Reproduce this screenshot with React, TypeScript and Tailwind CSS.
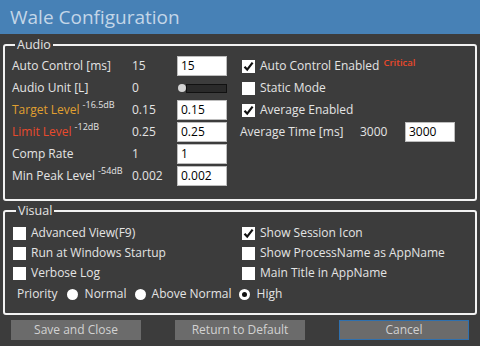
import React from "react";

type LevelRow = {
  label: string;
  labelClass?: string;
  db?: string;
  value: string;
  input?: string;
  slider?: boolean;
};

const audioRows: LevelRow[] = [
  { label: "Auto Control [ms]", value: "15", input: "15" },
  { label: "Audio Unit [L]", value: "0", slider: true },
  { label: "Target Level", labelClass: "text-[#e0a030]", db: "-16.5dB", value: "0.15", input: "0.15" },
  { label: "Limit Level", labelClass: "text-[#e84a2c]", db: "-12dB", value: "0.25", input: "0.25" },
  { label: "Comp Rate", value: "1", input: "1" },
  { label: "Min Peak Level", db: "-54dB", value: "0.002", input: "0.002" },
];

function Check({ checked }: { checked?: boolean }) {
  return (
    <span className="flex h-[13px] w-[13px] shrink-0 items-center justify-center bg-white">
      {checked && (
        <svg width="11" height="11" viewBox="0 0 11 11">
          <path d="M1.5 5.8 L4.2 8.6 L9.6 1.6" fill="none" stroke="#111" strokeWidth="2.2" />
        </svg>
      )}
    </span>
  );
}

function CheckRow({ label, checked }: { label: string; checked?: boolean }) {
  return (
    <div className="flex h-[20px] items-center gap-[5px]">
      <Check checked={checked} />
      <span>{label}</span>
    </div>
  );
}

function Radio({ checked }: { checked?: boolean }) {
  return (
    <span className="flex h-[11px] w-[11px] items-center justify-center rounded-full bg-white">
      {checked && <span className="h-[5px] w-[5px] rounded-full bg-[#111]" />}
    </span>
  );
}

function TextBox({ value }: { value: string }) {
  return (
    <div className="flex h-[20px] w-[50px] items-center border border-[#bdbdbd] bg-white pl-[3px] text-[12px] text-black">
      {value}
    </div>
  );
}

function Button({ label, primary }: { label: string; primary?: boolean }) {
  return (
    <button
      className={
        "flex h-[20px] w-[130px] items-center justify-center bg-[#6b6b6b] text-[12px] text-[#d2d2d2] " +
        (primary ? "border border-[#2f70ae]" : "")
      }
    >
      {label}
    </button>
  );
}

export default function App() {
  return (
    <div className="h-[346px] w-[480px] overflow-hidden bg-[#3c3c3c] font-['Open_Sans',sans-serif] text-[12px] text-[#e4e4e4]">
      {/* title bar */}
      <div className="flex h-[34px] items-center bg-[#4781b6] pl-[10px] text-[19px] text-[#c3d6e8]">
        Wale Configuration
      </div>

      {/* Audio */}
      <fieldset className="mx-[3px] mt-[3px] rounded-[3px] border-2 border-[#f2f2f2] pb-[12px] pl-[7px]">
        <legend className="ml-[3px] px-[2px] text-[12.5px] leading-[16px]">Audio</legend>
        <div className="flex pt-[2px]">
          <div className="flex w-[230px] flex-col">
            {audioRows.map((r) => (
              <div key={r.label} className="flex h-[22px] items-center">
                <div className="flex w-[120px] items-start">
                  <span className={r.labelClass}>{r.label}</span>
                  {r.db && <span className="relative -top-[3px] ml-[3px] text-[9px]">{r.db}</span>}
                </div>
                <span className="w-[45px]">{r.value}</span>
                {r.input && <TextBox value={r.input} />}
                {r.slider && (
                  <div className="flex items-center">
                    <span className="ml-[1px] h-[8px] w-[8px] rounded-full bg-[#d4d4d4]" />
                    <span className="h-[9px] w-[41px] border border-[#111] bg-[#2a2a2a]" />
                  </div>
                )}
              </div>
            ))}
          </div>
          <div className="flex flex-col">
            <div className="flex h-[22px] items-center gap-[5px]">
              <Check checked />
              <span>Auto Control Enabled</span>
              <span className="relative -top-[3px] -ml-[1px] text-[9.5px] font-semibold text-[#e8482a]">Critical</span>
            </div>
            <div className="flex h-[22px] items-center gap-[5px]">
              <Check />
              <span>Static Mode</span>
            </div>
            <div className="flex h-[22px] items-center gap-[5px]">
              <Check checked />
              <span>Average Enabled</span>
            </div>
            <div className="-ml-[2px] flex h-[22px] items-center">
              <span className="w-[120px]">Average Time [ms]</span>
              <span className="w-[45px]">3000</span>
              <TextBox value="3000" />
            </div>
          </div>
        </div>
      </fieldset>

      {/* Visual */}
      <fieldset className="mx-[3px] mt-[2px] rounded-[3px] border-2 border-[#f2f2f2] pb-[8px] pl-[8px]">
        <legend className="ml-[3px] px-[2px] text-[12.5px] leading-[16px]">Visual</legend>
        <div className="flex pt-[4px]">
          <div className="flex w-[229px] flex-col">
            <CheckRow label="Advanced View(F9)" />
            <CheckRow label="Run at Windows Startup" />
            <CheckRow label="Verbose Log" />
          </div>
          <div className="flex flex-col">
            <CheckRow label="Show Session Icon" checked />
            <CheckRow label="Show ProcessName as AppName" />
            <CheckRow label="Main Title in AppName" />
          </div>
        </div>
        <div className="flex h-[22px] items-center pl-[4px]">
          <span>Priority</span>
          <span className="ml-[9px] flex items-center gap-[7px]">
            <Radio />
            Normal
          </span>
          <span className="ml-[8px] flex items-center gap-[6px]">
            <Radio />
            Above Normal
          </span>
          <span className="ml-[7px] flex items-center gap-[7px]">
            <Radio checked />
            High
          </span>
        </div>
      </fieldset>

      {/* buttons */}
      <div className="flex justify-between px-[11px] pt-[5px]">
        <Button label="Save and Close" />
        <Button label="Return to Default" />
        <Button label="Cancel" primary />
      </div>
    </div>
  );
}
